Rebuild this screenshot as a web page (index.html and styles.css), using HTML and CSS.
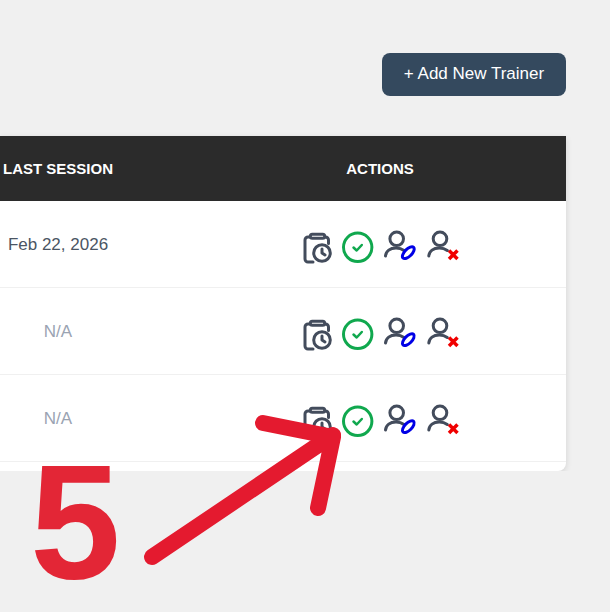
FILE: index.html
```html
<!DOCTYPE html>
<html lang="en">
<head>
    <meta charset="UTF-8">
    <meta name="viewport" content="width=device-width, initial-scale=1.0">
    <title>Trainers</title>
    <link rel="stylesheet" href="styles.css">
</head>
<body>

    <svg class="defs" width="0" height="0">
        <symbol id="ic-history" viewBox="0 0 30 34">
            <g fill="none" stroke="#434c5c" stroke-width="3" stroke-linecap="round" stroke-linejoin="round">
                <path d="M8 7H6a3 3 0 0 0-3 3V29a3 3 0 0 0 3 3H11"/>
                <path d="M23 7h.5a3 3 0 0 1 3 3V13.500"/>
                <rect x="8.300" y="4.300" width="14.400" height="4" rx="2"/>
                <circle cx="20" cy="23" r="8.300"/>
                <path d="M20 19V23L23 25"/>
            </g>
        </symbol>
        <symbol id="ic-check" viewBox="0 0 33 34">
            <circle cx="16.700" cy="17.300" r="14.200" fill="none" stroke="#10a84e" stroke-width="3"/>
            <path d="M12.500 17.500L15.700 20.500L20.800 15" fill="none" stroke="#10a84e" stroke-width="2.500" stroke-linecap="round" stroke-linejoin="round"/>
        </symbol>
        <symbol id="ic-edit" viewBox="0 0 34 34">
            <g fill="none" stroke="#434c5c" stroke-width="3" stroke-linecap="round">
                <circle cx="13.700" cy="8.800" r="6.800"/>
                <path d="M2.500 26C3 21 7 18 13 18C16 18 19 19 21 20.500"/>
            </g>
            <ellipse cx="25.300" cy="22.700" rx="7.500" ry="3.600" transform="rotate(-45 25.300 22.700)" fill="#fff" stroke="#0000e6" stroke-width="3"/>
        </symbol>
        <symbol id="ic-remove" viewBox="0 0 35 34">
            <g fill="none" stroke="#434c5c" stroke-width="3" stroke-linecap="round">
                <circle cx="14" cy="8.800" r="6.800"/>
                <path d="M2.800 26C3.300 21 7.300 18 13.300 18C16.300 18 19.300 19 21.300 20.500"/>
            </g>
            <path d="M23 20.500L31.500 29M31.500 20.500L23 29" fill="none" stroke="#f00000" stroke-width="3.500"/>
        </symbol>
    </svg>

    <div class="top-bar">
        <button class="add-btn">+ Add New Trainer</button>
    </div>

    <div class="card">
        <div class="row head">
            <div class="col-session">LAST SESSION</div>
            <div class="col-actions">ACTIONS</div>
        </div>

        <div class="row">
            <div class="col-session date">Feb 22, 2026</div>
            <div class="col-actions icons">
                <svg class="i-history"><use href="#ic-history"/></svg>
                <svg class="i-check"><use href="#ic-check"/></svg>
                <svg class="i-edit"><use href="#ic-edit"/></svg>
                <svg class="i-remove"><use href="#ic-remove"/></svg>
            </div>
        </div>

        <div class="row">
            <div class="col-session empty">N/A</div>
            <div class="col-actions icons">
                <svg class="i-history"><use href="#ic-history"/></svg>
                <svg class="i-check"><use href="#ic-check"/></svg>
                <svg class="i-edit"><use href="#ic-edit"/></svg>
                <svg class="i-remove"><use href="#ic-remove"/></svg>
            </div>
        </div>

        <div class="row">
            <div class="col-session empty">N/A</div>
            <div class="col-actions icons">
                <svg class="i-history"><use href="#ic-history"/></svg>
                <svg class="i-check"><use href="#ic-check"/></svg>
                <svg class="i-edit"><use href="#ic-edit"/></svg>
                <svg class="i-remove"><use href="#ic-remove"/></svg>
            </div>
        </div>
    </div>

    <!-- Step marker drawn over the table -->
    <div class="step-number">5</div>
    <svg class="step-arrow" width="610" height="612" viewBox="0 0 610 612">
        <path d="M152 557L333 435M263 423L333 437L318 508" fill="none" stroke="#e41a2f" stroke-width="16" stroke-linecap="round" stroke-linejoin="round"/>
    </svg>

</body>
</html>
```

FILE: styles.css
```css
body {
    font-family: "Liberation Sans", Arial, sans-serif;
    background-color: #f0f0f0;
    margin: 0;
    padding: 53px 44px 0 0;
}
.defs {
    position: absolute;
}
.top-bar {
    display: flex;
    justify-content: flex-end;
    margin-bottom: 40px;
}
.add-btn {
    width: 184px;
    height: 43px;
    padding: 0 0 2px;
    font-family: inherit;
    font-size: 17px;
    color: #ffffff;
    background: #34495e;
    border: none;
    border-radius: 8px;
}
.card {
    background: #ffffff;
    border-radius: 0 0 8px 0;
    box-shadow: 0 2px 6px rgba(0, 0, 0, 0.12);
    padding-bottom: 9px;
    overflow: hidden;
}
.row {
    display: flex;
    align-items: center;
    height: 87px;
    box-sizing: border-box;
    border-bottom: 1px solid #f0f0f0;
}
.row.head {
    height: 65px;
    background: #2b2b2b;
    color: #ffffff;
    font-size: 15px;
    font-weight: bold;
    border-bottom: none;
}
.col-session {
    width: 116px;
    flex-shrink: 0;
    text-align: center;
    white-space: nowrap;
}
.col-actions {
    flex: 1;
    margin-left: 78px;
    text-align: center;
}
.date {
    padding-top: 2px;
    font-size: 17px;
    color: #4b5563;
}
.empty {
    padding-top: 2px;
    font-size: 17px;
    color: #9aa3b2;
}
.icons {
    display: flex;
    justify-content: center;
    gap: 9px;
    margin-top: 5px;
    padding-left: 3px;
}
.icons svg {
    height: 34px;
}
.i-history {
    width: 30px;
}
.i-check {
    width: 33px;
}
.i-edit {
    width: 34px;
}
.i-remove {
    width: 35px;
}
.step-number {
    position: absolute;
    left: 30px;
    top: 447px;
    font-size: 163px;
    font-weight: bold;
    line-height: 150px;
    color: #e32636;
}
.step-arrow {
    position: absolute;
    left: 0;
    top: 0;
}
```
